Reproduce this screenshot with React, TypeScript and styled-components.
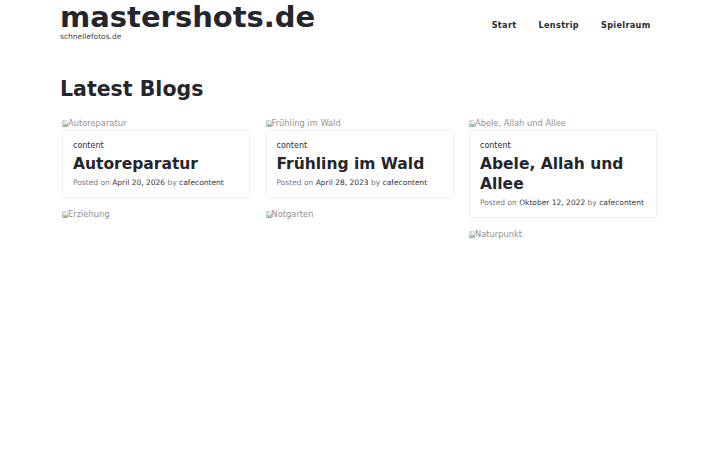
import React from "react";
import styled, { createGlobalStyle } from "styled-components";

const GlobalStyle = createGlobalStyle`
  html, body {
    margin: 0;
    padding: 0;
    background: #ffffff;
  }
  body {
    font-family: "DejaVu Sans", "Liberation Sans", sans-serif;
    color: #25262b;
  }
  a {
    color: inherit;
    text-decoration: none;
  }
`;

const Page = styled.div`
  width: 720px;
  min-height: 450px;
`;

const Container = styled.div`
  width: 600px;
  margin: 0 auto;
`;

const Header = styled.header`
  display: flex;
  justify-content: space-between;
  align-items: flex-start;
  padding-top: 2px;
`;

const Brand = styled.div`
  display: flex;
  flex-direction: column;
`;

const SiteTitle = styled.a`
  font-size: 29px;
  font-weight: 700;
  line-height: 29px;
  padding-top: 0.5px;
  color: #25262b;
`;

const Tagline = styled.span`
  font-size: 7.5px;
  line-height: 9px;
  color: #444;
`;

const Nav = styled.nav`
  display: flex;
  padding-top: 17px;
  margin-right: -1px;
`;

const NavLink = styled.a`
  font-size: 8.2px;
  font-weight: 700;
  color: #2b2c30;
  padding: 0 10.5px 0 11.5px;
  letter-spacing: 0.3px;
  line-height: 12px;
`;

const Heading = styled.h1`
  margin: 35.5px 0 0;
  font-size: 20.5px;
  font-weight: 700;
  line-height: 26px;
  color: #25262b;
`;

const Grid = styled.div`
  display: grid;
  grid-template-columns: repeat(3, 188px);
  column-gap: 15.5px;
  margin: 15px 0 0 2px;
  align-items: start;
`;

const Column = styled.div`
  display: flex;
  flex-direction: column;
  gap: 10px;
`;

const Post = styled.article`
  display: flex;
  flex-direction: column;
`;

const Broken = styled.span`
  display: inline-flex;
  align-items: center;
  height: 12px;
  font-size: 8.3px;
  color: #929292;
  line-height: 12px;
`;

const Card = styled.div`
  border: 1px solid #f1f1f1;
  border-radius: 2px;
  padding: 9px 10px 8px;
  margin-top: 1px;
`;

const Category = styled.div`
  font-size: 8px;
  line-height: 12px;
  color: #2d2e33;
`;

const Title = styled.h2`
  margin: 2px 0 0;
  font-size: 15.5px;
  font-weight: 700;
  line-height: 20px;
  color: #25262b;
`;

const Meta = styled.div`
  margin-top: 3px;
  font-size: 7.5px;
  line-height: 12px;
  color: #7a7a7a;
  white-space: nowrap;
`;

const MetaLink = styled.a`
  color: #34353a;
`;

function BrokenIcon() {
  return (
    <svg width="6" height="7" viewBox="0 0 12 14">
      <path d="M0.5 0.5h8l3 3v4l-2 1.5-2-1.5-2 1.5-2-1.5-3 1.5z" fill="#f4f4f4" stroke="#a0a0a0" strokeWidth="1" />
      <rect x="0.5" y="8.5" width="11" height="5" fill="#eef5ee" stroke="#a0a0a0" strokeWidth="1" />
      <path d="M1.5 13l3-3 2 1.5 2-2 2.5 3.5z" fill="#5fa05f" />
      <circle cx="4" cy="4" r="1.3" fill="#8fb3d9" />
    </svg>
  );
}

function ImagePlaceholder({ alt }: { alt: string }) {
  return (
    <Broken>
      <BrokenIcon />
      {alt}
    </Broken>
  );
}

type PostData = {
  title: string;
  date: string;
};

const columns: { posts: PostData[]; extra: string }[] = [
  { posts: [{ title: "Autoreparatur", date: "April 20, 2026" }], extra: "Erziehung" },
  { posts: [{ title: "Frühling im Wald", date: "April 28, 2023" }], extra: "Notgarten" },
  { posts: [{ title: "Abele, Allah und Allee", date: "Oktober 12, 2022" }], extra: "Naturpunkt" },
];

export default function App() {
  return (
    <Page>
      <GlobalStyle />
      <Container>
        <Header>
          <Brand>
            <SiteTitle href="#">mastershots.de</SiteTitle>
            <Tagline>schnellefotos.de</Tagline>
          </Brand>
          <Nav>
            <NavLink href="#">Start</NavLink>
            <NavLink href="#">Lenstrip</NavLink>
            <NavLink href="#">Spielraum</NavLink>
          </Nav>
        </Header>
        <Heading>Latest Blogs</Heading>
        <Grid>
          {columns.map((col) => (
            <Column key={col.extra}>
              {col.posts.map((p) => (
                <Post key={p.title}>
                  <ImagePlaceholder alt={p.title} />
                  <Card>
                    <Category>content</Category>
                    <Title>{p.title}</Title>
                    <Meta>
                      Posted on <MetaLink href="#">{p.date}</MetaLink> by{" "}
                      <MetaLink href="#">cafecontent</MetaLink>
                    </Meta>
                  </Card>
                </Post>
              ))}
              <Post>
                <ImagePlaceholder alt={col.extra} />
              </Post>
            </Column>
          ))}
        </Grid>
      </Container>
    </Page>
  );
}
